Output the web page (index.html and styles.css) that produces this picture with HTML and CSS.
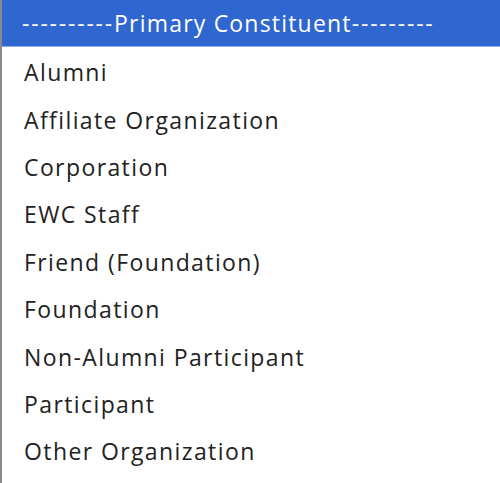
FILE: index.html
```html
<!DOCTYPE html>
<html>
<head>
<meta charset="utf-8">
<link rel="stylesheet" href="styles.css">
</head>
<body>
<div class="list">
  <div class="opt selected"><span class="dash">----------</span>Primary Constituent<span class="dash">---------</span></div>
  <div class="opt">Alumni</div>
  <div class="opt">Affiliate Organization</div>
  <div class="opt">Corporation</div>
  <div class="opt">EWC Staff</div>
  <div class="opt">Friend (Foundation)</div>
  <div class="opt">Foundation</div>
  <div class="opt">Non-Alumni Participant</div>
  <div class="opt">Participant</div>
  <div class="opt">Other Organization</div>
</div>
</body>
</html>
```

FILE: styles.css
```css
html, body {
  margin: 0;
  padding: 0;
  background: #fff;
}
.list {
  width: 500px;
  height: 483px;
  box-sizing: border-box;
  border-left: 2px solid #8a8a8a;
  display: flex;
  flex-direction: column;
  overflow: hidden;
  font-family: "Open Sans", "Noto Sans", sans-serif;
  font-size: 23px;
  letter-spacing: 1.4px;
  color: #222;
}
.opt {
  height: 47.4px;
  box-sizing: border-box;
  padding-top: 3px;
  flex: none;
  display: flex;
  align-items: center;
  padding-left: 22px;
  white-space: nowrap;
}
.selected {
  background: #2f66d0;
  color: #fff;
  height: 47px;
  padding-top: 0;
  border-bottom: 1px solid #8fb0ea;
  margin-left: -2px;
  padding-left: 22px;
  letter-spacing: 1.2px;
}
.dash {
  letter-spacing: 1.8px;
}
```
